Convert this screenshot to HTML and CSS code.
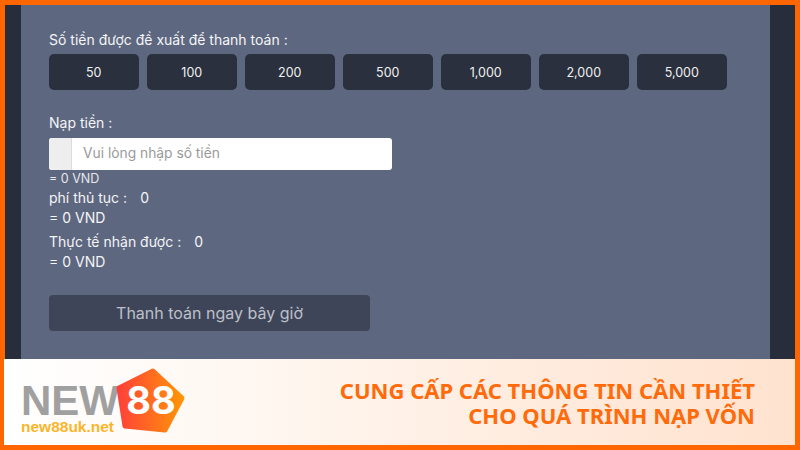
FILE: index.html
```html
<!DOCTYPE html>
<html lang="vi">
<head>
<meta charset="utf-8">
<title>Nạp tiền</title>
<link rel="stylesheet" href="styles.css">
</head>
<body>
<div class="frame">
  <main class="stage">
    <section class="panel">
      <div class="label">Số tiền được đề xuất để thanh toán<span class="colon">:</span></div>
      <div class="amounts">
        <button class="amount">50</button>
        <button class="amount">100</button>
        <button class="amount">200</button>
        <button class="amount">500</button>
        <button class="amount">1,000</button>
        <button class="amount">2,000</button>
        <button class="amount">5,000</button>
      </div>
      <div class="label deposit-label">Nạp tiền<span class="colon">:</span></div>
      <div class="input-group">
        <span class="addon"></span>
        <span class="placeholder">Vui lòng nhập số tiền</span>
      </div>
      <div class="small">= 0 VND</div>
      <div class="line">phí thủ tục<span class="colon">:</span><span class="val">0</span></div>
      <div class="line">= 0 VND</div>
      <div class="line actual">Thực tế nhận được<span class="colon">:</span><span class="val">0</span></div>
      <div class="line">= 0 VND</div>
      <button class="pay">Thanh toán ngay bây giờ</button>
    </section>
  </main>
  <footer class="banner">
    <div class="logo">
      <div class="wordmark">
        <div class="new">NEW</div>
        <div class="domain">new88uk.net</div>
      </div>
      <svg class="badge" width="72" height="70" viewBox="0 0 72 70">
        <defs>
          <linearGradient id="pent" gradientUnits="userSpaceOnUse" x1="0" y1="0" x2="72" y2="0">
            <stop offset="0" stop-color="#ff3d3a"/>
            <stop offset="1" stop-color="#ff9a05"/>
          </linearGradient>
        </defs>
        <path d="M38 5 L67 32 L50 64 L10 60 L4 22 Z" fill="url(#pent)" stroke="url(#pent)" stroke-width="5" stroke-linejoin="round"/>
        <text x="36" y="48" text-anchor="middle" class="eights">88</text>
      </svg>
    </div>
    <h1 class="headline">CUNG CẤP CÁC THÔNG TIN CẦN THIẾT<br>CHO QUÁ TRÌNH NẠP VỐN</h1>
  </footer>
</div>
</body>
</html>
```
FILE: styles.css
```css
* { box-sizing: border-box; }
html, body { margin: 0; padding: 0; }
body { width: 800px; height: 450px; overflow: hidden; font-family: Inter, "Liberation Sans", sans-serif; }
.frame { width: 800px; height: 450px; border: 5px solid #ff6600; display: flex; flex-direction: column; background: #272d3a; }
.stage { height: 354px; padding: 0 25px 0 16px; background: #272d3a; }
.panel { height: 100%; background: #5e6780; padding: 26px 28px 0; color: #f4f5f7; }
.label { font-size: 14px; line-height: 18px; }
.colon { margin-left: 4px; }
.amounts { display: flex; gap: 8.5px; margin-top: 5px; }
.amount { width: 89.5px; height: 36px; border: 0; border-radius: 5px; background: #2a303d; color: #f0f1f3; font: 12.5px Inter, sans-serif; padding: 0; }
.deposit-label { margin-top: 24px; }
.input-group { display: flex; width: 343px; height: 32px; margin-top: 6px; background: #fff; border-radius: 3px; overflow: hidden; }
.addon { width: 23px; background: #eeeeee; border-right: 1px solid #dcdcdc; }
.placeholder { padding-left: 11px; font-size: 13.8px; line-height: 31px; color: #9a9a9a; }
.small { font-size: 12.5px; line-height: 18px; color: #e6e8ec; }
.line { font-size: 14px; line-height: 20px; }
.actual { margin-top: 4px; }
.val { margin-left: 13px; }
.pay { display: block; width: 321px; height: 36px; margin-top: 23px; border: 0; border-radius: 4px; background: #3f4558; color: #bcc0ca; font: 16px Inter, sans-serif; padding: 0; }
.banner { flex: 1; display: flex; align-items: center; justify-content: space-between; margin-left: -1px; padding: 0 40px 0 17px; background: linear-gradient(90deg, #ffffff 0%, #fff6ef 35%, #ffe9da 75%, #ffe3cf 100%); }
.logo { display: flex; align-items: center; }
.wordmark { margin-top: 12px; font-family: "Liberation Sans", sans-serif; font-weight: 700; }
.new { font-size: 42px; line-height: 36px; color: #a0a0a0; }
.domain { font-size: 15.5px; line-height: 15px; color: #fbb52b; }
.badge { margin-left: -4px; margin-top: -2px; }
.eights { font-family: Inter, sans-serif; font-weight: 700; font-size: 38px; fill: #fff; }
.headline { margin: 2px 0 0; text-align: right; font-family: "Noto Sans", sans-serif; font-weight: 700; font-size: 22px; line-height: 25px; color: #ff6a0a; }
```
